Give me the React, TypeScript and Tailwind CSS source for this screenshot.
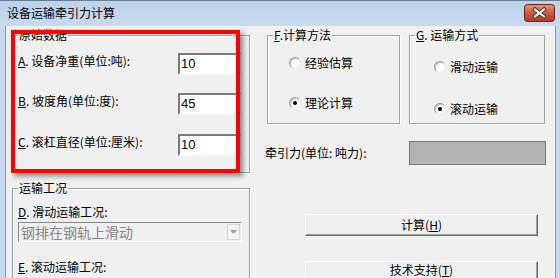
import React from "react";

const cjk = "font-['SimSun','Noto_Sans_CJK_SC',sans-serif]";

function Group({
  label,
  className,
  children,
}: {
  label: React.ReactNode;
  className: string;
  children?: React.ReactNode;
}) {
  return (
    <div
      className={`relative border border-[#a0a0a0] shadow-[inset_1px_1px_0_#fff,1px_1px_0_#fff] ${className}`}
    >
      {/* group caption sits on the etched line */}
      <div className="absolute left-[5px] top-[-8px] bg-[#f0f0f0] px-px text-[12px] leading-[14px] text-black">
        {label}
      </div>
      {children}
    </div>
  );
}

function Radio({ checked, label }: { checked?: boolean; label: string }) {
  return (
    <div className="flex items-center gap-[4px]">
      <div className="flex h-[12px] w-[12px] items-center justify-center rounded-full border border-t-[#9a9a9a] border-l-[#9a9a9a] border-b-[#e8e8e8] border-r-[#e8e8e8] bg-white shadow-[inset_1px_1px_1px_rgba(0,0,0,0.25)]">
        {checked && <div className="h-[4px] w-[4px] rounded-full bg-black" />}
      </div>
      <span className="text-[12px] leading-[14px] text-black">{label}</span>
    </div>
  );
}

function Field({ label, value }: { label: React.ReactNode; value: string }) {
  return (
    <div className="flex items-start">
      <div className="w-[165px] pl-[5px] pt-[1px] text-[12px] leading-[14px]">{label}</div>
      <div className="h-[22px] w-[63px] border-2 border-t-[#7a7a7a] border-l-[#7a7a7a] border-b-[#f8f8f8] border-r-[#e3e3e3] bg-white pl-[1px] font-['Liberation_Sans',sans-serif] text-[13px] leading-[18px]">
        {value}
      </div>
    </div>
  );
}

function Combo({ value }: { value: string }) {
  return (
    <div className="flex h-[20px] w-[224px] border border-t-[#8a8a8a] border-l-[#8a8a8a] border-b-[#fff] border-r-[#fff] bg-[#f0f0f0]">
      <div className="flex-1 pl-[2px] text-[14px] leading-[18px] text-[#858585]">{value}</div>
      <div className="m-[1px] flex w-[13px] items-center justify-center border border-[#d6d6d6] bg-[#f4f4f4]">
        <svg width="7" height="4" viewBox="0 0 7 4">
          <path d="M0 0 H7 L3.5 4 Z" fill="#a0a0a0" />
        </svg>
      </div>
    </div>
  );
}

function Btn({ children, top }: { children: React.ReactNode; top?: boolean }) {
  return (
    <div
      className={`ml-[40px] flex h-[22px] w-[233px] justify-center border border-t-[#fff] border-l-[#fff] border-b-[#6a6a6a] border-r-[#6a6a6a] bg-[#f0f0f0] shadow-[inset_-1px_-1px_0_#a0a0a0] text-[12px] leading-[14px] ${
        top ? "items-start pt-[1px]" : "items-center"
      }`}
    >
      {children}
    </div>
  );
}

const U = ({ c }: { c: string }) => <span className="underline underline-offset-1">{c}</span>;

export default function App() {
  return (
    <div
      className={`relative flex h-[278px] w-[560px] flex-col overflow-hidden bg-[#c6d9ee] ${cjk} text-black`}
    >
      {/* title bar */}
      <div className="flex h-[26px] shrink-0 items-start justify-between border-t border-[#6c7f95] bg-gradient-to-b from-[#bcd2ea] to-[#c8daee]">
        <span className="pl-[7px] pt-[5px] text-[12px] leading-[14px]">设备运输牵引力计算</span>
        {/* close button drawn as svg */}
        <svg className="mr-[5px] mt-[3px]" width="31" height="18" viewBox="0 0 31 18">
          <defs>
            <linearGradient id="cls" x1="0" y1="0" x2="0" y2="1">
              <stop offset="0" stopColor="#e3957f" />
              <stop offset="0.5" stopColor="#cc5a43" />
              <stop offset="1" stopColor="#b33a24" />
            </linearGradient>
          </defs>
          <rect x="0.5" y="0.5" width="30" height="17" rx="3" fill="url(#cls)" stroke="#6b2418" />
          <path d="M11 5.5 L20 12.5 M20 5.5 L11 12.5" stroke="#4a2620" strokeWidth="4" strokeLinecap="square" />
          <path d="M11 5.5 L20 12.5 M20 5.5 L11 12.5" stroke="#fff" strokeWidth="2.2" strokeLinecap="square" />
        </svg>
      </div>

      <div className="flex flex-1">
        <div className="w-[5px] shrink-0" />
        {/* client area */}
        <div className="flex w-[550px] border-l border-[#8796a8] bg-[#f0f0f0]">
          {/* left column */}
          <div className="ml-[6px] flex w-[238px] flex-col">
            <Group label="原始数据" className="mt-[9px] h-[138px]">
              <div className="mt-[17px] flex flex-col">
                <Field
                  label={<><U c="A" />. 设备净重(单位:吨):</>}
                  value="10"
                />
                <div className="mt-[18px]">
                  <Field label={<><U c="B" />. 坡度角(单位:度):</>} value="45" />
                </div>
                <div className="mt-[19px]">
                  <Field
                    label={<><U c="C" />. 滚杠直径(单位:厘米):</>}
                    value="10"
                  />
                </div>
              </div>
            </Group>

            <Group label="运输工况" className="mt-[15px] h-[120px]">
              <div className="flex flex-col pl-[5px]">
                <div className="mt-[16px] text-[12px] leading-[14px]">
                  <U c="D" />. 滑动运输工况:
                </div>
                <div className="mt-[3px]">
                  <Combo value="钢排在钢轨上滑动" />
                </div>
                <div className="mt-[18px] text-[12px] leading-[14px]">
                  <U c="E" />. 滚动运输工况:
                </div>
                <div className="mt-[5px]">
                  <Combo value="" />
                </div>
              </div>
            </Group>
          </div>

          {/* right column */}
          <div className="ml-[15px] flex w-[282px] flex-col">
            <div className="flex gap-[9px]">
              <Group label={<><U c="F" />.计算方法</>} className="ml-[2px] mt-[9px] h-[89px] w-[133px]">
                <div className="flex flex-col gap-[26px] pl-[21px] pt-[20px]">
                  <Radio label="经验估算" />
                  <Radio label="理论计算" checked />
                </div>
              </Group>
              <Group label={<><U c="G" />. 运输方式</>} className="mt-[9px] h-[89px] w-[136px]">
                <div className="flex flex-col gap-[28px] pl-[24px] pt-[24px]">
                  <Radio label="滑动运输" />
                  <Radio label="滚动运输" checked />
                </div>
              </Group>
            </div>

            <div className="mt-[17px] flex items-center">
              <span className="w-[144px] text-[12px] leading-[14px]">牵引力(单位: 吨力):</span>
              <div className="h-[24px] w-[137px] border border-[#7a7a7a] bg-[#b3b3b3]" />
            </div>

            <div className="mt-[49px]">
              <Btn>计算(<U c="H" />)</Btn>
            </div>
            <div className="mt-[25px]">
              <Btn top>技术支持(<U c="T" />)</Btn>
            </div>
          </div>
        </div>
        <div className="flex-1 border-l border-[#8796a8]" />
      </div>

      {/* red annotation box around 原始数据 */}
      <div className="pointer-events-none absolute left-[11px] top-[30px] h-[143px] w-[229px] border-4 border-[#ff0000] shadow-[3px_3px_5px_rgba(0,0,0,0.45)]" />
    </div>
  );
}
